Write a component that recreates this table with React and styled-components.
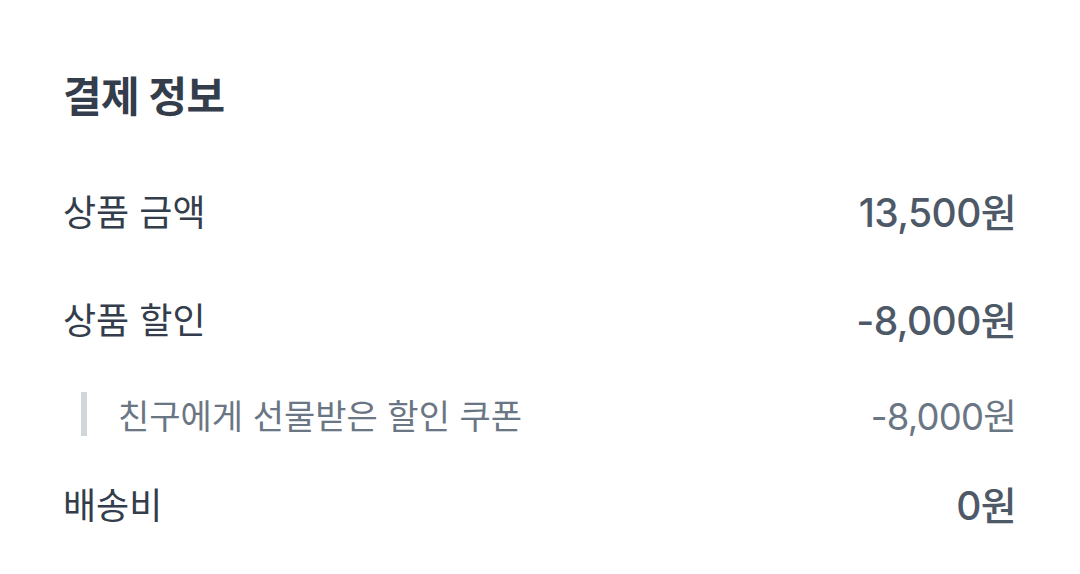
import React from "react";
import styled, { createGlobalStyle } from "styled-components";

const GlobalStyle = createGlobalStyle`
  body {
    margin: 0;
    background: #fff;
    font-family: Inter, "Noto Sans CJK KR", sans-serif;
  }
`;

const Section = styled.section`
  display: flex;
  flex-direction: column;
  padding: 73px 64px 0 63px;
`;

const Title = styled.h2`
  margin: 0 0 65px;
  height: 48px;
  line-height: 48px;
  font-size: 42px;
  font-weight: 700;
  color: #333d4b;
  letter-spacing: -0.6px;
`;

const Row = styled.div`
  display: flex;
  align-items: center;
  justify-content: space-between;
  height: 48px;
  margin-bottom: ${(p) => p.$gap || 0}px;
`;

const Label = styled.span`
  font-size: 36px;
  color: #333d4b;
`;

const Amount = styled.span`
  font-size: 39px;
  font-weight: 500;
  color: #4e5968;
  letter-spacing: -0.6px;
`;

const SubRow = styled(Row)`
  height: 44px;
  padding-left: 18px;
`;

const SubLabel = styled.span`
  display: flex;
  align-items: center;
  height: 100%;
  padding-left: 31px;
  border-left: 6px solid #d1d6db;
  font-size: 34px;
  color: #6b7684;
`;

const SubAmount = styled.span`
  font-size: 36.5px;
  color: #6b7684;
  letter-spacing: -0.8px;
`;

const rows = [
  { label: "상품 금액", amount: "13,500원", gap: 60 },
  { label: "상품 할인", amount: "-8,000원", gap: 50 },
];

export default function App() {
  return (
    <>
      <GlobalStyle />
      <Section>
        <Title>결제 정보</Title>
        {rows.map((r) => (
          <Row key={r.label} $gap={r.gap}>
            <Label>{r.label}</Label>
            <Amount>{r.amount}</Amount>
          </Row>
        ))}
        <SubRow $gap={43}>
          <SubLabel>친구에게 선물받은 할인 쿠폰</SubLabel>
          <SubAmount>-8,000원</SubAmount>
        </SubRow>
        <Row>
          <Label>배송비</Label>
          <Amount>0원</Amount>
        </Row>
      </Section>
    </>
  );
}
